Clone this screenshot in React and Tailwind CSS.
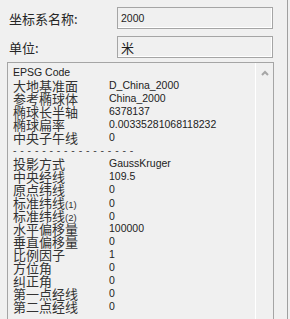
import React from 'react';

const rows = [
  ['大地基准面', 'D_China_2000'],
  ['参考椭球体', 'China_2000'],
  ['椭球长半轴', '6378137'],
  ['椭球扁率', '0.0033528106811823​2'.replace('\u200b', '')],
  ['中央子午线', '0'],
  null,
  ['投影方式', 'GaussKruger'],
  ['中央经线', '109.5'],
  ['原点纬线', '0'],
  ['标准纬线', '0', '(1)'],
  ['标准纬线', '0', '(2)'],
  ['水平偏移量', '100000'],
  ['垂直偏移量', '0'],
  ['比例因子', '1'],
  ['方位角', '0'],
  ['纠正角', '0'],
  ['第一点经线', '0'],
  ['第二点经线', '0'],
];

const cjk = "font-['Noto_Sans_CJK_SC',sans-serif]";
const latin = "font-['Liberation_Sans',Arial,sans-serif]";

function Field({ label, value, isCjk }) {
  return (
    <div className="flex items-center h-[22px]">
      <span className={`${cjk} text-[13px] leading-[13px] text-[#262626] w-[110px] pl-[2px]`}>{label}</span>
      <div className="w-[156px] h-[22px] border border-[#a5a5a5] shadow-[inset_-1px_-1px_0_#ffffff] bg-[#f0f0f0] flex items-center px-[3px]">
        <span className={`${isCjk ? cjk + ' text-[13px]' : latin + ' text-[10.5px]'} leading-none text-[#1e1e1e]`}>{value}</span>
      </div>
    </div>
  );
}

export default function App() {
  return (
    <div className="w-[290px] h-[319px] bg-[#f0f0f0] overflow-hidden flex">
      <div className="w-[287px] h-full pt-[7px] pl-[7px] flex flex-col">
        <Field label="坐标系名称:" value="2000" />
        <div className="h-[7px]" />
        <Field label="单位:" value="米" isCjk />
        <div className="mt-[4px] w-[267px] flex-1 border border-[#a5a5a5] border-b-0 flex">
          <div className="flex-1 pt-[3px] pl-[5px] text-[#222]">
            <div className={`${latin} text-[10.5px] leading-[13px] h-[13px]`}>EPSG Code</div>
            {rows.map((r, i) =>
              r === null ? (
                <div key={i} className={`${latin} text-[10.5px] leading-[13px] h-[13px] tracking-[3.8px] text-[#444]`}>
                  -----------------
                </div>
              ) : (
                <div key={i} className="grid grid-cols-[96px_1fr] h-[13px] items-center">
                  <span className={`${cjk} text-[13px] leading-[13px] text-[#333] whitespace-nowrap`}>
                    {r[0]}
                    {r[2] && <span className={`${latin} text-[9.5px]`}>{r[2]}</span>}
                  </span>
                  <span className={`${latin} text-[10.5px] leading-[13px]`}>{r[1]}</span>
                </div>
              )
            )}
          </div>
          <div className="w-[18px] h-full border-l border-white flex justify-center pt-[7px]">
            <svg width="8" height="6" viewBox="0 0 8 6">
              <polyline points="1,5 4,2 7,5" fill="none" stroke="#a6a6a6" strokeWidth="2" />
            </svg>
          </div>
        </div>
      </div>
      <div className="w-[1px] h-full bg-[#a0a0a0]" />
    </div>
  );
}
